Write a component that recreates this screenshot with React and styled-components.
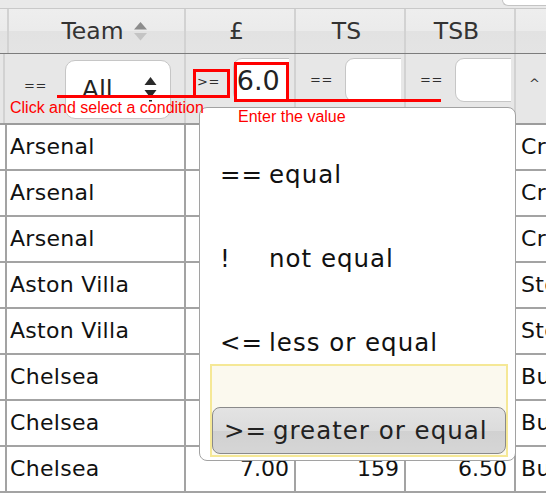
import styled, { createGlobalStyle } from "styled-components";

const GlobalStyle = createGlobalStyle`
  html, body {
    margin: 0;
    padding: 0;
    background: #fff;
  }
  body {
    font-family: "DejaVu Sans", Verdana, sans-serif;
    color: #111;
  }
`;

const COLS = "5px 181px 110px 110px 110px 90px";

const rows = [
  { team: "Arsenal", price: "5.50", ts: "131", tsb: "4.20", next: "Crystal Palace" },
  { team: "Arsenal", price: "6.50", ts: "98", tsb: "2.10", next: "Crystal Palace" },
  { team: "Arsenal", price: "7.00", ts: "112", tsb: "3.80", next: "Crystal Palace" },
  { team: "Aston Villa", price: "6.00", ts: "87", tsb: "1.90", next: "Stoke City" },
  { team: "Aston Villa", price: "6.50", ts: "104", tsb: "5.40", next: "Stoke City" },
  { team: "Chelsea", price: "6.00", ts: "120", tsb: "7.30", next: "Burnley" },
  { team: "Chelsea", price: "8.50", ts: "143", tsb: "9.10", next: "Burnley" },
  { team: "Chelsea", price: "7.00", ts: "159", tsb: "6.50", next: "Burnley" },
];

const options = [
  { op: "==", label: "equal" },
  { op: "!", label: "not equal" },
  { op: "<=", label: "less or equal" },
];

function SortIcon() {
  return (
    <svg width="15" height="21" viewBox="0 0 15 21">
      <polygon points="7.5,1 14,8.5 1,8.5" fill="#8c8c8c" />
      <polygon points="1,12 14,12 7.5,19.5" fill="#c4c4c4" />
    </svg>
  );
}

function SelectArrows() {
  return (
    <svg width="13" height="26" viewBox="0 0 13 26">
      <polygon points="6.5,0 12.5,8 0.5,8" fill="#2a2a2a" />
      <polygon points="0.5,13 12.5,13 6.5,21" fill="#2a2a2a" />
      <rect x="5" y="23" width="3" height="1.5" fill="#2a2a2a" />
    </svg>
  );
}

export default function App() {
  return (
    <Page>
      <GlobalStyle />
      <TopStrip>
        <TabStub />
      </TopStrip>

      <HeaderRow>
        <HeadCell />
        <HeadCell $shift={27}>
          <span>Team</span>
          <SortWrap>
            <SortIcon />
          </SortWrap>
        </HeadCell>
        <HeadCell>£</HeadCell>
        <HeadCell>TS</HeadCell>
        <HeadCell>TSB</HeadCell>
        <HeadCell />
      </HeaderRow>

      <FilterRow>
        <FilterCell />
        <FilterCell $pad={19} $gap={18}>
          <Op $h={56}>==</Op>
          <SelectBox>
            <span>All</span>
            <SelectArrows />
          </SelectBox>
        </FilterCell>
        <FilterCell $pad={11} $gap={13}>
          <Op $h={44} $mt={2}>&gt;=</Op>
          <InputClip>
            <ValueInput readOnly value="6.0" $big />
          </InputClip>
        </FilterCell>
        <FilterCell $pad={14} $gap={12}>
          <Op $h={44}>==</Op>
          <InputClip>
            <ValueInput readOnly value="" />
          </InputClip>
        </FilterCell>
        <FilterCell $pad={14} $gap={12}>
          <Op $h={44}>==</Op>
          <InputClip>
            <ValueInput readOnly value="" />
          </InputClip>
        </FilterCell>
        <FilterCell $pad={13}>
          <Caret>^</Caret>
        </FilterCell>
      </FilterRow>

      {rows.map((r, i) => (
        <BodyRow key={i}>
          <Cell />
          <Cell>{r.team}</Cell>
          <Cell $num>{r.price}</Cell>
          <Cell $num>{r.ts}</Cell>
          <Cell $num $pr={7}>{r.tsb}</Cell>
          <Cell>{r.next}</Cell>
        </BodyRow>
      ))}

      <Popup>
        {options.map((o) => (
          <Option key={o.op}>
            <Sym>{o.op}</Sym>
            <span>{o.label}</span>
          </Option>
        ))}
        <Selected>
          <SelectedButton>
            <Sym>&gt;=</Sym>
            <span>greater or equal</span>
          </SelectedButton>
        </Selected>
      </Popup>

      <RedLine style={{ left: 57, top: 95, width: 138 }} />
      <RedBox style={{ left: 193, top: 69, width: 37, height: 29 }} />
      <RedBox style={{ left: 234, top: 62, width: 55, height: 40 }} />
      <RedLine style={{ left: 288, top: 99, width: 153 }} />
      <Note style={{ left: 10, top: 100 }}>Click and select a condition</Note>
      <Note style={{ left: 238, top: 109 }}>Enter the value</Note>
    </Page>
  );
}

const Page = styled.div`
  position: relative;
  width: 546px;
  height: 494px;
  overflow: hidden;
  background: #fff;
`;

const TopStrip = styled.div`
  height: 8px;
  background: #e9e9e9;
  display: flex;
  justify-content: flex-end;
`;

const TabStub = styled.div`
  width: 44px;
  height: 6px;
  box-sizing: border-box;
  background: #fff;
  border: 1px solid #c4c4c4;
  border-top: none;
  border-right: none;
  border-bottom-left-radius: 8px;
`;

const GridRow = styled.div`
  display: grid;
  grid-template-columns: ${COLS};
  width: 596px;
  box-sizing: border-box;
`;

const HeaderRow = styled(GridRow)`
  height: 46px;
  border-top: 1px solid #c9c9c9;
  border-bottom: 1px solid #7c7c7c;
  background: linear-gradient(#eeeeee 0%, #ebebeb 50%, #e2e2e2 50%, #e4e4e4 100%);
`;

const HeadCell = styled.div`
  display: flex;
  align-items: center;
  justify-content: center;
  box-sizing: border-box;
  border-right: 2px solid #d2d2d2;
  padding-left: ${(p) => p.$shift || 0}px;
  padding-right: 7px;
  font-size: 23.5px;
  color: #333;
  white-space: nowrap;
`;

const SortWrap = styled.span`
  display: flex;
  margin-left: 9px;
`;

const FilterRow = styled(GridRow)`
  height: 71px;
  border-bottom: 2px solid #9c9c9c;
  background: #e7e7e7;
`;

const FilterCell = styled.div`
  display: flex;
  align-items: flex-start;
  box-sizing: border-box;
  height: 69px;
  padding: 4px 0 0 ${(p) => p.$pad || 0}px;
  gap: ${(p) => p.$gap || 0}px;
  border-right: 2px solid #d2d2d2;
  overflow: hidden;
`;

const Op = styled.span`
  font-size: 13px;
  color: #2e2e2e;
  letter-spacing: 0.5px;
  line-height: ${(p) => p.$h || 20}px;
  margin-top: ${(p) => p.$mt || 0}px;
`;

const SelectBox = styled.div`
  display: flex;
  align-items: center;
  justify-content: space-between;
  box-sizing: border-box;
  width: 106px;
  height: 59px;
  margin-top: 2px;
  padding: 0 13px 0 16px;
  background: #fff;
  border: 1px solid #c6c6c6;
  border-radius: 10px;
  font-size: 25px;
  color: #222;
`;

const InputClip = styled.div`
  display: flex;
  width: 56px;
  height: 44px;
  overflow: hidden;
`;

const ValueInput = styled.input`
  flex: none;
  width: 80px;
  height: 44px;
  box-sizing: border-box;
  margin: 0;
  padding: 0 3px;
  border: 1px solid #c6c6c6;
  border-radius: 9px;
  background: #fff;
  font-family: "DejaVu Sans", Verdana, sans-serif;
  font-size: ${(p) => (p.$big ? 27 : 20)}px;
  color: #222;
  outline: none;
`;

const Caret = styled.span`
  font-size: 13px;
  line-height: 52px;
  color: #333;
`;

const BodyRow = styled(GridRow)`
  height: 46px;
  border-bottom: 2px solid #a3a3a3;
`;

const Cell = styled.div`
  box-sizing: border-box;
  border-right: 2px solid #a3a3a3;
  padding: 0 ${(p) => (p.$num ? p.$pr || 5 : 0)}px 0 5px;
  font-size: 22px;
  letter-spacing: ${(p) => (p.$num ? 0 : 0.3)}px;
  line-height: 44px;
  text-align: ${(p) => (p.$num ? "right" : "left")};
  white-space: nowrap;
  overflow: hidden;
  color: #111;
`;

const Popup = styled.div`
  position: absolute;
  left: 199px;
  top: 107px;
  width: 317px;
  height: 354px;
  box-sizing: border-box;
  padding: 52px 7px 3px 10px;
  display: flex;
  flex-direction: column;
  background: #fff;
  border: 1.5px solid #a2a2a2;
  border-radius: 8px;
`;

const Option = styled.div`
  display: flex;
  height: 30px;
  line-height: 30px;
  padding-left: 10px;
  font-size: 24.5px;
  letter-spacing: 1px;
  color: #111;
  white-space: nowrap;
  & + & {
    margin-top: 54px;
  }
`;

const Sym = styled.span`
  display: inline-block;
  width: 49px;
  flex: none;
`;

const Selected = styled.div`
  flex: 1;
  margin-top: 6px;
  display: flex;
  flex-direction: column;
  justify-content: flex-end;
  padding-bottom: 1px;
  background: #fbf9ee;
  border: 2px solid #f5e896;
`;

const SelectedButton = styled.div`
  display: flex;
  align-items: center;
  height: 47px;
  box-sizing: border-box;
  padding-left: 11px;
  border: 1.5px solid #8a8a8a;
  border-radius: 8px;
  background: linear-gradient(#e3e3e3 0%, #dcdcdc 50%, #d1d1d1 52%, #d6d6d6 100%);
  font-size: 24.5px;
  letter-spacing: 1px;
  color: #222;
  white-space: nowrap;
`;

const RedLine = styled.div`
  position: absolute;
  height: 3px;
  background: #ff0000;
`;

const RedBox = styled.div`
  position: absolute;
  box-sizing: border-box;
  border: 3px solid #ff0000;
`;

const Note = styled.div`
  position: absolute;
  font-family: "Liberation Sans", Arial, sans-serif;
  font-size: 16px;
  line-height: 16px;
  color: #ff0000;
  white-space: nowrap;
`;
